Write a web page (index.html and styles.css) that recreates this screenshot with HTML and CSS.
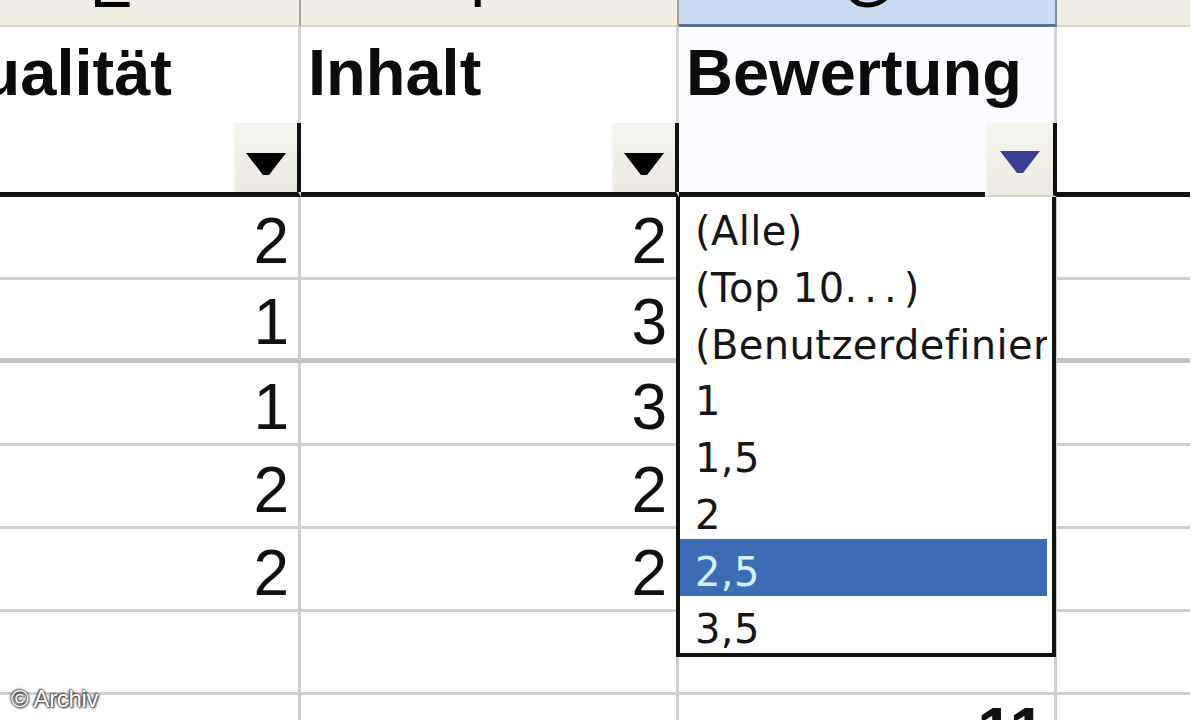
FILE: index.html
```html
<!DOCTYPE html>
<html lang="de">
<head>
<meta charset="utf-8">
<title>Autofilter</title>
<link rel="stylesheet" href="styles.css">
</head>
<body>
<div class="sheet">
  <div class="grid">
    <div class="colhead"><span class="letter">E</span></div>
    <div class="colhead"><span class="letter">F</span></div>
    <div class="colhead sel"><span class="letter">G</span></div>
    <div class="colhead last"></div>

    <div class="fh"><span class="label">Qualität</span><span class="btn"><svg class="tri" viewBox="0 0 40 22" width="40" height="22"><polygon points="0,0 40,0 23,22 17,22"/></svg></span></div>
    <div class="fh"><span class="label">Inhalt</span><span class="btn"><svg class="tri" viewBox="0 0 40 22" width="40" height="22"><polygon points="0,0 40,0 23,22 17,22"/></svg></span></div>
    <div class="fh selcol"><span class="label">Bewertung</span><span class="btn active"><svg class="tri" viewBox="0 0 40 22" width="40" height="22"><polygon points="0,0 40,0 23,22 17,22"/></svg></span></div>
    <div class="fh last"></div>

    <div class="c">2</div><div class="c">2</div><div class="c"></div><div class="c last"></div>
    <div class="c thick">1</div><div class="c thick">3</div><div class="c thick"></div><div class="c thick last"></div>
    <div class="c">1</div><div class="c">3</div><div class="c"></div><div class="c last"></div>
    <div class="c">2</div><div class="c">2</div><div class="c"></div><div class="c last"></div>
    <div class="c">2</div><div class="c">2</div><div class="c"></div><div class="c last"></div>
    <div class="c"></div><div class="c"></div><div class="c"></div><div class="c last"></div>
    <div class="c sum"></div><div class="c sum"></div><div class="c sum"><b>11</b></div><div class="c sum last"></div>
  </div>

  <ul class="dropdown">
    <li>(Alle)</li>
    <li>(Top 10<span class="dots">...</span>)</li>
    <li>(Benutzerdefinier</li>
    <li>1</li>
    <li>1,5</li>
    <li>2</li>
    <li class="hl">2,5</li>
    <li>3,5</li>
  </ul>

  <div class="copy">© Archiv</div>
</div>
</body>
</html>
```

FILE: styles.css
```css
html, body {
  margin: 0;
  padding: 0;
  background: #ffffff;
  overflow: hidden;
  width: 1200px;
  height: 720px;
}

.sheet {
  position: relative;
  width: 1200px;
  height: 720px;
  overflow: hidden;
  font-family: "Liberation Sans", Arial, sans-serif;
  color: #111;
}

.grid {
  display: grid;
  grid-template-columns: 378px 378px 378px 133px;
  grid-template-rows: 27px 170px 83px 83px 83px 83px 83px 83px 83px;
  margin-left: -77px;
  width: 1267px;
}

/* column letters */
.colhead {
  box-sizing: border-box;
  background: #f1efe3;
  border-bottom: 2px solid #d9d5c3;
  border-right: 2px solid #a3a194;
  overflow: hidden;
  text-align: center;
}
.colhead.sel {
  background: #c7daf0;
  border-bottom: 3px solid #5e7390;
  border-right-color: #7d8ea6;
}
.colhead.last {
  border-right: 0;
}
.letter {
  display: block;
  font-size: 64px;
  line-height: 64px;
  margin-top: -47px;
  color: #000;
}

/* filter header row */
.fh {
  box-sizing: border-box;
  display: flex;
  flex-direction: column;
  justify-content: space-between;
  padding: 13px 0 0 7px;
  border-right: 3px solid #d6d6d6;
  border-bottom: 5px solid #111;
  background: #fff;
}
.fh.selcol {
  background: #fafcff;
}
.fh.last {
  border-right: 0;
}
.label {
  font-weight: bold;
  font-size: 65px;
  line-height: 65px;
  white-space: nowrap;
  color: #0c0c0c;
}
.btn {
  box-sizing: border-box;
  align-self: flex-end;
  width: 68px;
  height: 69px;
  margin-right: -3px;
  padding-top: 13px;
  display: flex;
  align-items: center;
  justify-content: center;
  background: linear-gradient(#f5f4ee, #ebe9df);
  border-left: 2px solid #f8f7f1;
  border-right: 4px solid #111;
}
.btn.active {
  width: 72px;
  height: 74px;
  margin-bottom: -5px;
  padding-top: 5px;
  background: linear-gradient(#f6f5ee, #eceadf);
  border-bottom: 2px solid #d8d6cb;
}
.tri polygon {
  fill: #000;
}
.btn.active .tri polygon {
  fill: #3a4194;
}

/* data cells */
.c {
  box-sizing: border-box;
  display: flex;
  align-items: flex-end;
  justify-content: flex-end;
  padding: 0 9px 4px 0;
  border-right: 3px solid #cfcfcf;
  border-bottom: 3px solid #cfcfcf;
  font-size: 64px;
  line-height: 64px;
  color: #111;
}
.c.thick {
  border-bottom: 5px solid #c2c2c2;
}
.c.last {
  border-right: 0;
}
.c.sum {
  align-items: flex-start;
  padding-top: 4px;
  border-bottom: 0;
}
.c b {
  font-weight: bold;
}

/* open filter list */
.dropdown {
  position: absolute;
  left: 676px;
  top: 197px;
  box-sizing: border-box;
  width: 380px;
  height: 460px;
  margin: 0;
  padding: 1px 5px 0 0;
  list-style: none;
  background: #fff;
  border: 4px solid #111;
  border-top: 0;
  overflow: hidden;
  font-family: "DejaVu Sans", Verdana, sans-serif;
  font-size: 40px;
  letter-spacing: 0.4px;
}
.dropdown li {
  box-sizing: border-box;
  height: 56.8px;
  padding: 10px 0 0 15px;
  line-height: 46px;
  white-space: nowrap;
  overflow: hidden;
  color: #161616;
}
.dropdown li.hl {
  background: #3b6db4;
  color: #d3f1ff;
}
.dots {
  letter-spacing: 7px;
}

/* watermark */
.copy {
  position: absolute;
  left: 11px;
  top: 685px;
  font-family: "Liberation Sans", Arial, sans-serif;
  font-size: 24px;
  line-height: 28px;
  color: #ffffff;
  letter-spacing: -0.3px;
  text-shadow: 0 0 2px #333, 1px 1px 2px #222, -1px -1px 2px #444;
}
```
